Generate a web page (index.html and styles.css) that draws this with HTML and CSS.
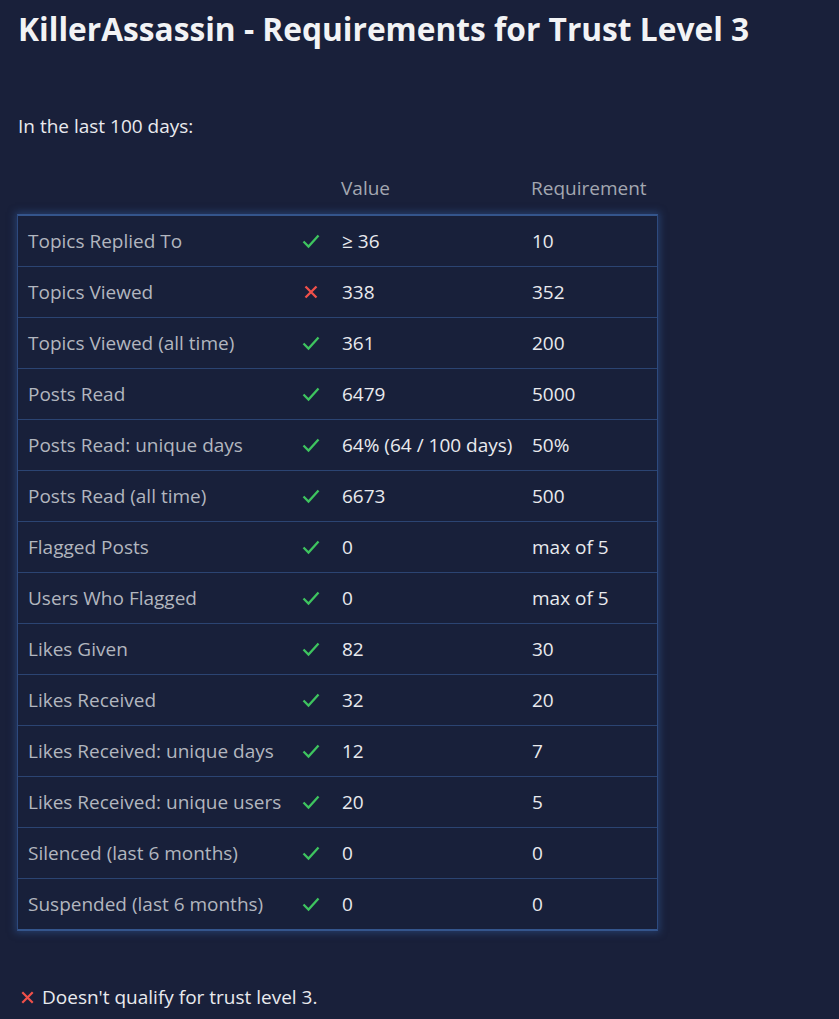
FILE: index.html
```html
<!DOCTYPE html>
<html lang="en">
<head>
<meta charset="utf-8">
<title>Requirements for Trust Level 3</title>
<link rel="stylesheet" href="styles.css">
</head>
<body>
<div class="page">
  <h1 class="title">KillerAssassin - Requirements for Trust Level 3</h1>
  <p class="intro">In the last 100 days:</p>
  <div class="reqs">
    <div class="row head">
      <div class="c-label"></div>
      <div class="c-icon"></div>
      <div class="c-val">Value</div>
      <div class="c-req">Requirement</div>
    </div>
    <div class="box">
      <div class="row"><div class="c-label">Topics Replied To</div><div class="c-icon"><svg class="ok" viewBox="0 0 20 20"><path d="M2.5 10.5l5 5L17.5 4.5"/></svg></div><div class="c-val">≥ 36</div><div class="c-req">10</div></div>
      <div class="row"><div class="c-label">Topics Viewed</div><div class="c-icon"><svg class="no" viewBox="0 0 20 20"><path d="M4.5 4.5l11 11M15.5 4.5l-11 11"/></svg></div><div class="c-val">338</div><div class="c-req">352</div></div>
      <div class="row"><div class="c-label">Topics Viewed (all time)</div><div class="c-icon"><svg class="ok" viewBox="0 0 20 20"><path d="M2.5 10.5l5 5L17.5 4.5"/></svg></div><div class="c-val">361</div><div class="c-req">200</div></div>
      <div class="row"><div class="c-label">Posts Read</div><div class="c-icon"><svg class="ok" viewBox="0 0 20 20"><path d="M2.5 10.5l5 5L17.5 4.5"/></svg></div><div class="c-val">6479</div><div class="c-req">5000</div></div>
      <div class="row"><div class="c-label">Posts Read: unique days</div><div class="c-icon"><svg class="ok" viewBox="0 0 20 20"><path d="M2.5 10.5l5 5L17.5 4.5"/></svg></div><div class="c-val">64% (64 / 100 days)</div><div class="c-req">50%</div></div>
      <div class="row"><div class="c-label">Posts Read (all time)</div><div class="c-icon"><svg class="ok" viewBox="0 0 20 20"><path d="M2.5 10.5l5 5L17.5 4.5"/></svg></div><div class="c-val">6673</div><div class="c-req">500</div></div>
      <div class="row"><div class="c-label">Flagged Posts</div><div class="c-icon"><svg class="ok" viewBox="0 0 20 20"><path d="M2.5 10.5l5 5L17.5 4.5"/></svg></div><div class="c-val">0</div><div class="c-req">max of 5</div></div>
      <div class="row"><div class="c-label">Users Who Flagged</div><div class="c-icon"><svg class="ok" viewBox="0 0 20 20"><path d="M2.5 10.5l5 5L17.5 4.5"/></svg></div><div class="c-val">0</div><div class="c-req">max of 5</div></div>
      <div class="row"><div class="c-label">Likes Given</div><div class="c-icon"><svg class="ok" viewBox="0 0 20 20"><path d="M2.5 10.5l5 5L17.5 4.5"/></svg></div><div class="c-val">82</div><div class="c-req">30</div></div>
      <div class="row"><div class="c-label">Likes Received</div><div class="c-icon"><svg class="ok" viewBox="0 0 20 20"><path d="M2.5 10.5l5 5L17.5 4.5"/></svg></div><div class="c-val">32</div><div class="c-req">20</div></div>
      <div class="row"><div class="c-label">Likes Received: unique days</div><div class="c-icon"><svg class="ok" viewBox="0 0 20 20"><path d="M2.5 10.5l5 5L17.5 4.5"/></svg></div><div class="c-val">12</div><div class="c-req">7</div></div>
      <div class="row"><div class="c-label">Likes Received: unique users</div><div class="c-icon"><svg class="ok" viewBox="0 0 20 20"><path d="M2.5 10.5l5 5L17.5 4.5"/></svg></div><div class="c-val">20</div><div class="c-req">5</div></div>
      <div class="row"><div class="c-label">Silenced (last 6 months)</div><div class="c-icon"><svg class="ok" viewBox="0 0 20 20"><path d="M2.5 10.5l5 5L17.5 4.5"/></svg></div><div class="c-val">0</div><div class="c-req">0</div></div>
      <div class="row"><div class="c-label">Suspended (last 6 months)</div><div class="c-icon"><svg class="ok" viewBox="0 0 20 20"><path d="M2.5 10.5l5 5L17.5 4.5"/></svg></div><div class="c-val">0</div><div class="c-req">0</div></div>
    </div>
  </div>
  <p class="result"><svg class="no small" viewBox="0 0 20 20"><path d="M4.5 4.5l11 11M15.5 4.5l-11 11"/></svg>Doesn't qualify for trust level 3.</p>
</div>
</body>
</html>
```

FILE: styles.css
```css
html, body {
  margin: 0;
  padding: 0;
  background: #19203a;
}
.page {
  padding: 0 0 0 17px;
  font-family: "Open Sans", "Noto Sans", sans-serif;
  color: #e9eaee;
  font-size: 19px;
}
.title {
  margin: 0;
  padding-top: 7px;
  padding-left: 1px;
  font-size: 31.7px;
  font-weight: 700;
  line-height: 44px;
  color: #f2f3f5;
  white-space: nowrap;
}
.intro {
  margin: 62px 0 0 1px;
  line-height: 26px;
}
.reqs {
  width: 641px;
  margin-top: 36px;
}
.row {
  display: grid;
  grid-template-columns: 274px 40px 190px 1fr;
  align-items: center;
  height: 50px;
  border-bottom: 1px solid #2b4472;
}
.row:last-child {
  border-bottom: none;
}
.row.head {
  height: 26px;
  padding-bottom: 13px;
  border-bottom: none;
  color: #a3a7b1;
}
.box {
  border: 1px solid #2d4a7e;
  border-top: 2px solid #34558c;
  border-bottom: 2px solid #34558c;
  box-shadow: 0 0 7px 2px rgba(48, 82, 140, 0.55);
  background: #18203a;
}
.c-label {
  padding-left: 10px;
  color: #b2b6bf;
  white-space: nowrap;
}
.c-icon {
  display: flex;
  align-items: center;
  padding-left: 9px;
}
.c-val, .c-req {
  padding-left: 10px;
  white-space: nowrap;
}
svg {
  width: 20px;
  height: 20px;
  fill: none;
  stroke-width: 2.3;
  stroke-linecap: butt;
  stroke-linejoin: miter;
}
svg.ok { stroke: #3ec45f; }
svg.no { stroke: #f0504a; }
svg.small {
  width: 19px;
  height: 19px;
  margin-right: 5px;
  vertical-align: -3px;
}
.result {
  margin: 53px 0 0 1px;
  line-height: 26px;
}
```
